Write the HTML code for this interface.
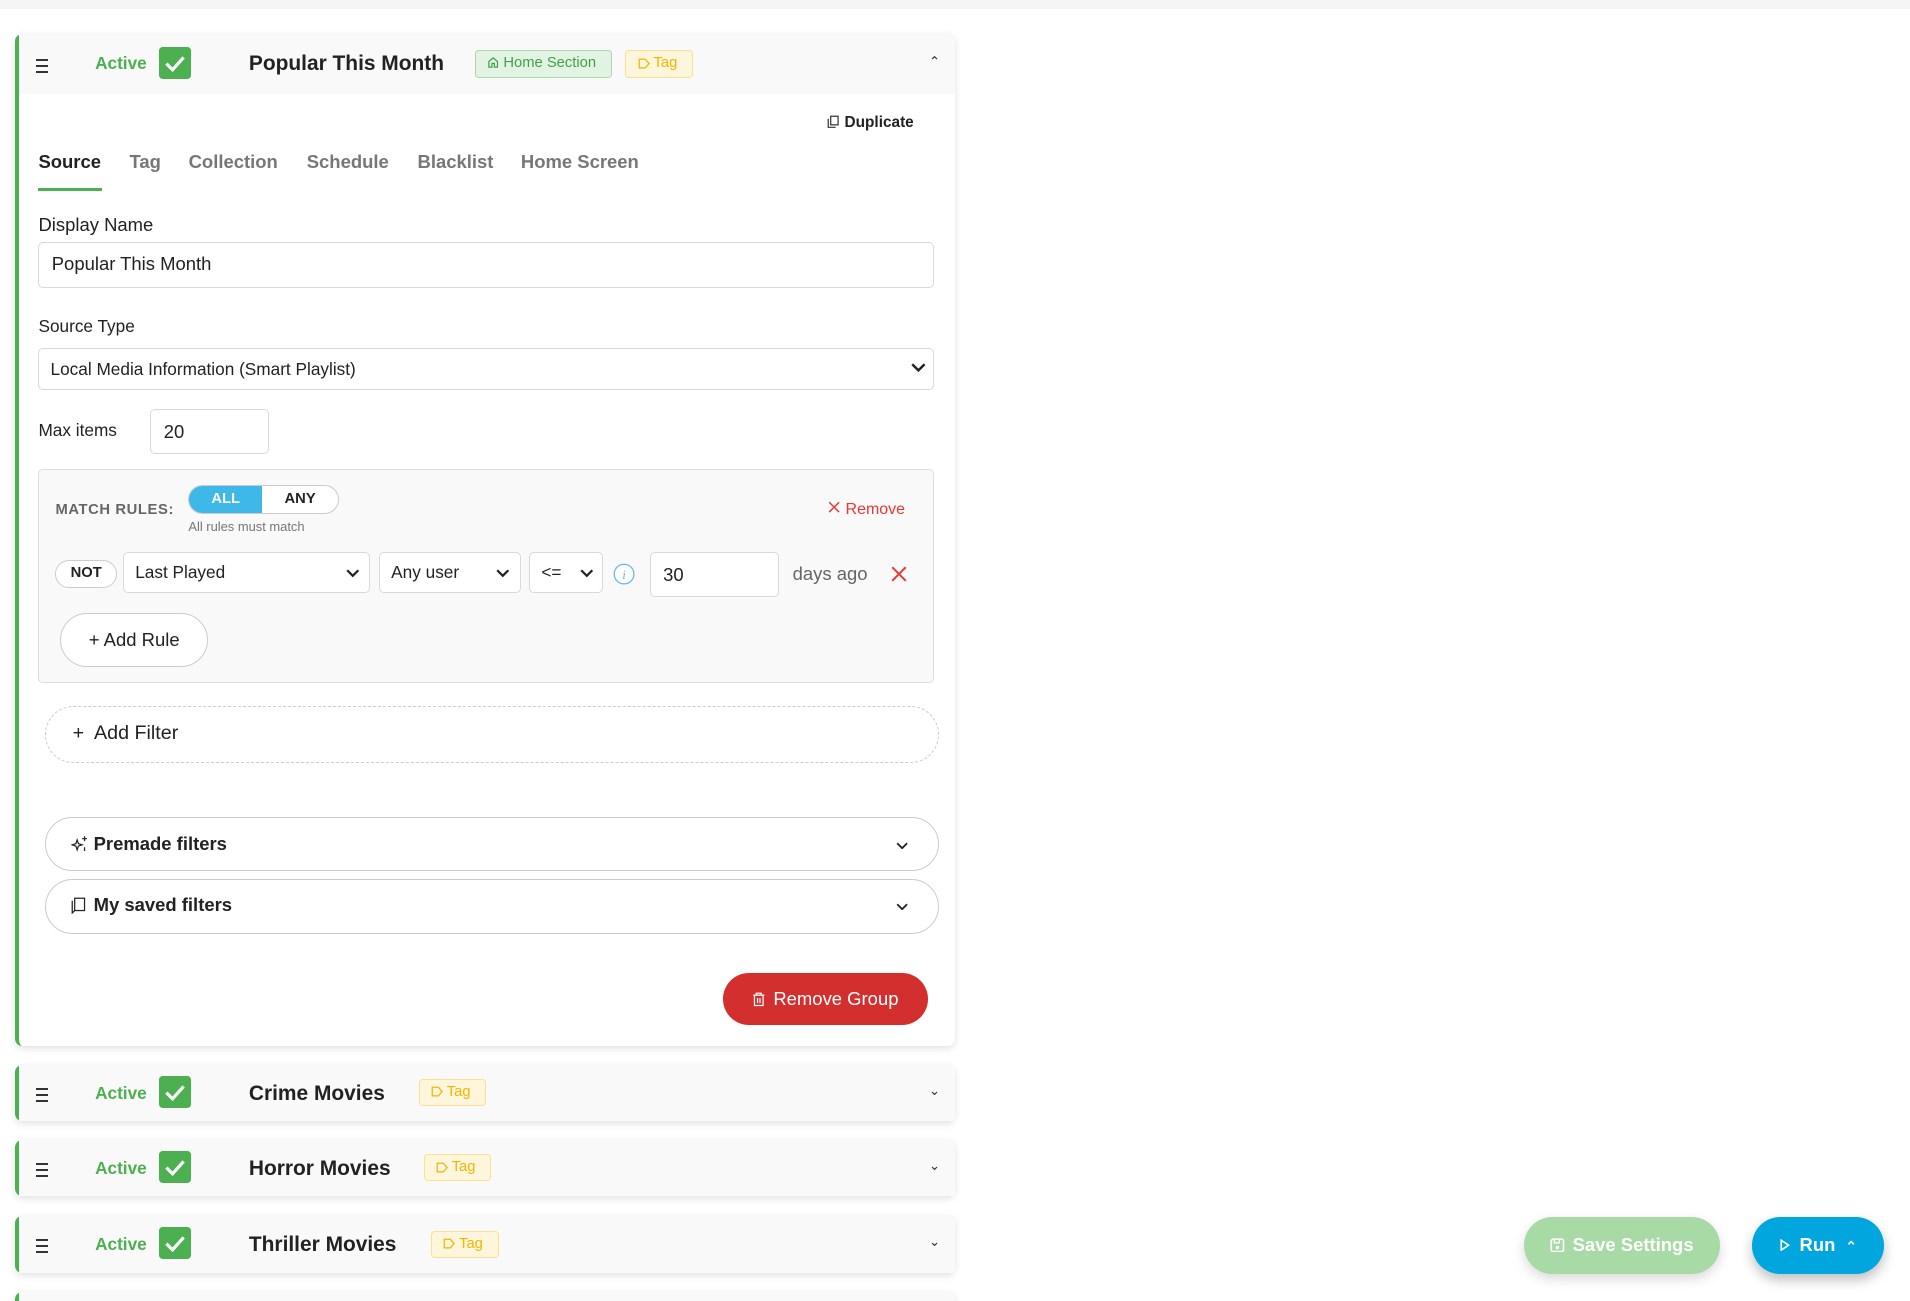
<!DOCTYPE html>
<html><head><meta charset="utf-8">
<style>
html,body{margin:0;padding:0;background:#fff;overflow:hidden;width:1910px;height:1301px}
#w{zoom:1.23067;position:relative;width:1552px;height:1058px;font-family:"Liberation Sans",sans-serif;color:#222}
.a{position:absolute}
.topbar{left:0;top:0;width:1552px;height:7px;background:#f5f5f5}
.card{left:12px;width:764px;border-left:4px solid #4caf50;border-radius:6px;box-shadow:0 2px 6px rgba(0,0,0,.12);background:#fff;box-sizing:border-box}
.hdr{position:absolute;left:0;top:0;right:0;height:48px;background:#f9f9f9}
.ham{position:absolute;left:14px;width:10px;height:8px;border-top:2px solid #333;border-bottom:2px solid #333}
.ham:after{content:"";position:absolute;left:0;right:0;top:3px;border-top:2px solid #333}
.act{position:absolute;left:62px;font-weight:bold;font-size:14px;color:#4caf50}
.chk{position:absolute;left:114px;width:26px;height:26px;background:#4caf50;border-radius:3px}
.ttl{position:absolute;left:187px;font-weight:bold;font-size:17px;color:#222}
.badge{position:absolute;height:22px;box-sizing:border-box;border-radius:3px;font-size:12px;line-height:20px;padding:0 9px}
.tag{background:#fdf5dc;border:1px solid #ffe08a;color:#f2b600}
.car{position:absolute;right:12px;font-size:11px;color:#333}
.tab{position:absolute;top:95px;font-size:15px;font-weight:bold;color:#777}
.lbl{font-size:15px;color:#222}
.inp{border:1px solid #d9d9d9;border-radius:4px;background:#fff;box-sizing:border-box}
.pill{border:1px solid #ccc;border-radius:24px;background:#fff;box-sizing:border-box}
.chev{position:absolute}
</style></head><body><div id="w">
<div class="a topbar"></div>

<div class="a card" style="top:28px;height:822px">
 <div class="hdr">
  <div class="ham" style="top:20px"></div>
  <div class="act" style="top:15px">Active</div>
  <div class="chk" style="top:10px"><svg width="26" height="26"><path d="M6 13.5l5 5 9-10" stroke="#fff" stroke-width="2.6" fill="none"/></svg></div>
  <div class="ttl" style="top:14px">Popular This Month</div>
  <div class="badge" style="left:371px;top:13px;width:111px;background:#e3f3e3;border:1px solid #a8d8aa;color:#43a047"><svg width="10" height="10" style="vertical-align:-1px;margin-right:3px"><path d="M1.5 9V4.5L5 1.5 8.5 4.5V9H6V6H4v3z" stroke="#43a047" fill="none"/></svg>Home Section</div>
  <div class="badge tag" style="left:493px;top:13px;width:55px"><svg width="10" height="9" style="vertical-align:-1px;margin-right:3px"><path d="M1 1h5l3 3.5-3 3.5H1z" stroke="#f2b600" fill="none"/></svg>Tag</div>
  <div class="car" style="top:16px">&#8963;</div>
 </div>
 <div class="a" style="left:657px;top:65px;font-size:12.5px;font-weight:bold;color:#222"><svg width="10" height="11" style="vertical-align:-1px;margin-right:4px"><rect x="3" y="1" width="6" height="7" stroke="#333" fill="none"/><path d="M1 3v7h6" stroke="#333" fill="none"/></svg>Duplicate</div>
 <div class="tab" style="left:16px;color:#222">Source</div>
 <div class="tab" style="left:90px">Tag</div>
 <div class="tab" style="left:138px">Collection</div>
 <div class="tab" style="left:234px">Schedule</div>
 <div class="tab" style="left:324px">Blacklist</div>
 <div class="tab" style="left:408px">Home Screen</div>
 <div class="a" style="left:16px;top:125px;width:52px;height:2px;background:#4caf50"></div>
 <div class="a lbl" style="left:16px;top:146px">Display Name</div>
 <div class="a inp" style="left:16px;top:169px;width:728px;height:37px;padding:8px 10px;font-size:15px">Popular This Month</div>
 <div class="a" style="left:16px;top:229px;font-size:14px">Source Type</div>
 <div class="a inp" style="left:16px;top:255px;width:728px;height:34px;padding:8px 9px;font-size:14px;font-weight:500">Local Media Information (Smart Playlist)
  <svg class="chev" style="right:6px;top:11px" width="12" height="8"><path d="M1 1l5 5 5-5" stroke="#222" stroke-width="2" fill="none"/></svg></div>
 <div class="a" style="left:16px;top:313px;font-size:14px">Max items</div>
 <div class="a inp" style="left:107px;top:304px;width:96px;height:37px;padding:9px 10px;font-size:15px">20</div>

 <div class="a" style="left:16px;top:353px;width:728px;height:174px;background:#f9f9f9;border:1px solid #ddd;border-radius:4px;box-sizing:border-box">
  <div class="a" style="left:13px;top:26px;font-size:12px;font-weight:bold;color:#666;letter-spacing:.5px">MATCH RULES:</div>
  <div class="a" style="left:121px;top:12px;width:122px;height:24px;border:1px solid #ccc;border-radius:12px;overflow:hidden;background:#fff;box-sizing:border-box">
   <div class="a" style="left:0;top:0;width:59px;height:24px;background:#3db8e8;color:#fff;font-size:12px;font-weight:bold;text-align:center;line-height:22px">ALL</div>
   <div class="a" style="left:59px;top:0;width:62px;font-size:12px;font-weight:bold;text-align:center;line-height:22px;color:#222">ANY</div>
  </div>
  <div class="a" style="left:121px;top:40px;font-size:10.5px;color:#777">All rules must match</div>
  <div class="a" style="left:641px;top:25px;font-size:13px;color:#e53935"><svg width="10" height="10" style="margin-right:4px"><path d="M1 1l8 8M9 1l-8 8" stroke="#e53935" stroke-width="1.2"/></svg>Remove</div>
  <div class="a pill" style="left:13px;top:73px;width:50px;height:23px;font-size:12px;font-weight:bold;text-align:center;line-height:21px">NOT</div>
  <div class="a inp" style="left:68px;top:67px;width:201px;height:33px;padding:7px 9px;font-size:14px">Last Played<svg class="chev" style="right:8px;top:13px" width="11" height="7"><path d="M1 1l4.5 4.5L10 1" stroke="#222" stroke-width="1.8" fill="none"/></svg></div>
  <div class="a inp" style="left:276px;top:67px;width:115px;height:33px;padding:7px 9px;font-size:14px">Any user<svg class="chev" style="right:8px;top:13px" width="11" height="7"><path d="M1 1l4.5 4.5L10 1" stroke="#222" stroke-width="1.8" fill="none"/></svg></div>
  <div class="a inp" style="left:398px;top:67px;width:60px;height:33px;padding:7px 9px;font-size:14px">&lt;=<svg class="chev" style="right:7px;top:13px" width="11" height="7"><path d="M1 1l4.5 4.5L10 1" stroke="#222" stroke-width="1.8" fill="none"/></svg></div>
  <svg class="a" style="left:466px;top:76px" width="18" height="18"><circle cx="9" cy="9" r="8" stroke="#64b5f6" fill="#fff"/><text x="9" y="13" font-size="10" font-style="italic" fill="#64b5f6" text-anchor="middle" font-family="Liberation Serif">i</text></svg>
  <div class="a inp" style="left:496px;top:67px;width:105px;height:36px;padding:9px 10px;font-size:15px">30</div>
  <div class="a" style="left:612px;top:76px;font-size:15px;color:#666">days ago</div>
  <svg class="a" style="left:692px;top:78px" width="13" height="13"><path d="M1 1l11 11M12 1L1 12" stroke="#e53935" stroke-width="1.6"/></svg>
  <div class="a pill" style="left:17px;top:116px;width:120px;height:44px;font-size:15px;font-weight:500;text-align:center;line-height:42px">+ Add Rule</div>
 </div>

 <div class="a" style="left:21px;top:546px;width:727px;height:46px;border:1.5px dashed #ccc;border-radius:23px;box-sizing:border-box;font-size:16px;font-weight:500;padding:12px 0 0 22px">+&nbsp; Add Filter</div>
 <div class="a pill" style="left:21px;top:636px;width:727px;height:44px;font-size:15px;font-weight:bold;padding:12px 0 0 21px"><svg width="14" height="14" style="vertical-align:-2px;margin-right:4px"><path d="M5 4l1 3 3 1-3 1-1 3-1-3-3-1 3-1zM11 1v4M9 3h4M11 10v3" stroke="#222" fill="none"/></svg>Premade filters<svg class="chev" style="right:24px;top:19px" width="10" height="6"><path d="M1 1l4 4 4-4" stroke="#222" stroke-width="1.5" fill="none"/></svg></div>
 <div class="a pill" style="left:21px;top:686px;width:727px;height:45px;font-size:15px;font-weight:bold;padding:12px 0 0 21px"><svg width="13" height="14" style="vertical-align:-2px;margin-right:5px"><rect x="3" y="1" width="8" height="10" stroke="#222" fill="none"/><path d="M1 3v10l2-2" stroke="#222" fill="none"/></svg>My saved filters<svg class="chev" style="right:24px;top:19px" width="10" height="6"><path d="M1 1l4 4 4-4" stroke="#222" stroke-width="1.5" fill="none"/></svg></div>
 <div class="a" style="left:572px;top:763px;width:167px;height:42px;background:#d32f2f;border-radius:21px;color:#fff;font-size:15px;font-weight:500;text-align:center;line-height:42px"><svg width="11" height="12" style="vertical-align:-1px;margin-right:6px"><path d="M1 2.5h9M3.5 2.5V1h4v1.5M2 3v8h7V3M4.5 5v4M6.5 5v4" stroke="#fff" fill="none"/></svg>Remove Group</div>
</div>

<div class="a card" style="top:865px;height:46px"><div class="hdr" style="height:46px">
 <div class="ham" style="top:19px"></div><div class="act" style="top:15px">Active</div>
 <div class="chk" style="top:9px"><svg width="26" height="26"><path d="M6 13.5l5 5 9-10" stroke="#fff" stroke-width="2.6" fill="none"/></svg></div>
 <div class="ttl" style="top:14px">Crime Movies</div>
 <div class="badge tag" style="left:325px;top:12px;width:55px"><svg width="10" height="9" style="vertical-align:-1px;margin-right:3px"><path d="M1 1h5l3 3.5-3 3.5H1z" stroke="#f2b600" fill="none"/></svg>Tag</div>
 <div class="car" style="top:15px">&#8964;</div></div></div>
<div class="a card" style="top:926px;height:46px"><div class="hdr" style="height:46px">
 <div class="ham" style="top:19px"></div><div class="act" style="top:15px">Active</div>
 <div class="chk" style="top:9px"><svg width="26" height="26"><path d="M6 13.5l5 5 9-10" stroke="#fff" stroke-width="2.6" fill="none"/></svg></div>
 <div class="ttl" style="top:14px">Horror Movies</div>
 <div class="badge tag" style="left:329px;top:12px;width:55px"><svg width="10" height="9" style="vertical-align:-1px;margin-right:3px"><path d="M1 1h5l3 3.5-3 3.5H1z" stroke="#f2b600" fill="none"/></svg>Tag</div>
 <div class="car" style="top:15px">&#8964;</div></div></div>
<div class="a card" style="top:988px;height:46px"><div class="hdr" style="height:46px">
 <div class="ham" style="top:19px"></div><div class="act" style="top:15px">Active</div>
 <div class="chk" style="top:9px"><svg width="26" height="26"><path d="M6 13.5l5 5 9-10" stroke="#fff" stroke-width="2.6" fill="none"/></svg></div>
 <div class="ttl" style="top:14px">Thriller Movies</div>
 <div class="badge tag" style="left:335px;top:12px;width:55px"><svg width="10" height="9" style="vertical-align:-1px;margin-right:3px"><path d="M1 1h5l3 3.5-3 3.5H1z" stroke="#f2b600" fill="none"/></svg>Tag</div>
 <div class="car" style="top:15px">&#8964;</div></div></div>
<div class="a card" style="top:1050px;height:46px"><div class="hdr" style="height:46px">
 <div class="chk" style="top:9px"></div>
 <div class="badge tag" style="left:329px;top:12px;width:55px"></div></div></div>

<div class="a" style="left:1238px;top:989px;width:160px;height:46px;border-radius:23px;background:#a8daa6;color:#fff;font-size:15px;font-weight:bold;text-align:center;line-height:46px;box-shadow:0 4px 10px rgba(0,0,0,.15)"><svg width="12" height="12" style="vertical-align:-1px;margin-right:6px"><rect x="1" y="1" width="10" height="10" rx="1.5" stroke="#fff" stroke-width="1.3" fill="none"/><path d="M3.5 1v3h4V1" stroke="#fff" fill="none"/><circle cx="6" cy="7.8" r="1.4" fill="#fff"/></svg>Save Settings</div>
<div class="a" style="left:1424px;top:989px;width:107px;height:46px;border-radius:23px;background:#00a6dd;color:#fff;font-size:15px;font-weight:bold;text-align:center;line-height:46px;box-shadow:0 5px 10px rgba(0,0,0,.25)"><svg width="8" height="10" style="vertical-align:0;margin-right:8px"><path d="M1 1l6 4-6 4z" stroke="#fff" stroke-width="1.3" fill="none"/></svg>Run <span style="font-size:11px;margin-left:4px">&#8963;</span></div>
</div></body></html>
